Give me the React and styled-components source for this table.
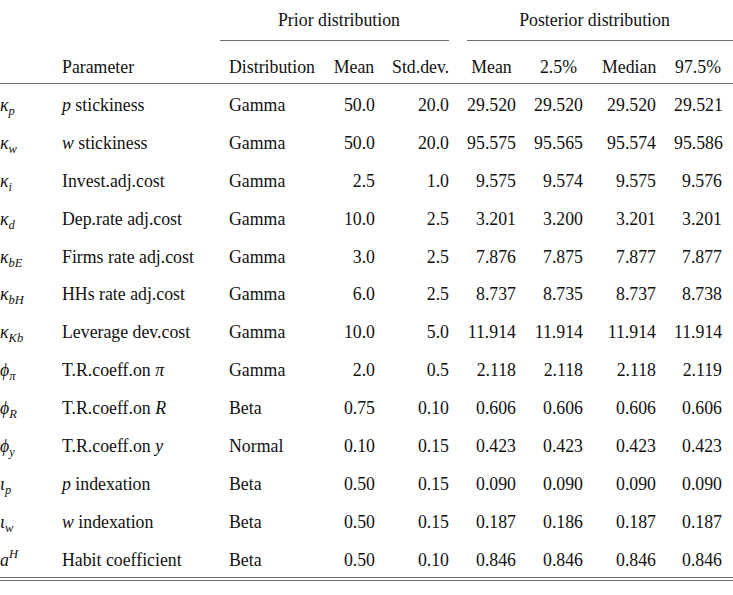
import React from "react";
import styled, { createGlobalStyle } from "styled-components";

const RULE = "#6e6e6e";

const GlobalStyle = createGlobalStyle`
  html, body {
    margin: 0;
    padding: 0;
    background: #fff;
  }
  body {
    font-family: "Liberation Serif", "Times New Roman", serif;
    color: #111;
  }
`;

// column widths from the left page edge
const COLUMNS = "62px 158px 105px 50px 74px 67px 67px 73px 80px";

const Page = styled.div`
  width: 733px;
  height: 595px;
  overflow: hidden;
`;

const Table = styled.div`
  width: 736px;
  font-size: 17.8px;
`;

const Row = styled.div`
  display: grid;
  grid-template-columns: ${COLUMNS};
  box-sizing: border-box;
  height: ${(props) => props.height};
  border-bottom: ${(props) => (props.ruled ? `1px solid ${RULE}` : "none")};
  padding-top: ${(props) => props.padTop};
  line-height: ${(props) => props.lineHeight};
`;

const Body = styled.div`
  border-bottom: 1px solid ${RULE};
`;

const BottomRule = styled.div`
  margin-top: 2px;
  height: 1px;
  background: ${RULE};
`;

const Spanner = styled.div`
  grid-column: ${(props) => props.span};
  margin-left: ${(props) => props.trim};
  padding: ${(props) => props.pad};
  text-align: center;
  border-bottom: 1px solid ${RULE};
  white-space: nowrap;
`;

const Cell = styled.div`
  white-space: nowrap;
  text-align: ${(props) => props.align || "left"};
  padding-left: ${(props) => props.pl || "0px"};
  padding-right: ${(props) => props.pr || "0px"};
`;

const M = styled.i`
  font-family: "Liberation Serif", "DejaVu Serif", serif;
  font-style: italic;
`;

const Sub = styled.sub`
  font-size: 12.5px;
  line-height: 0;
  vertical-align: -4px;
  font-style: italic;
`;

const Sup = styled.sup`
  font-size: 12.5px;
  line-height: 0;
  vertical-align: 8px;
  font-style: italic;
`;

// padding per numeric column: [left, right]
const NUM_PAD = [
  ["8px", "0px"],
  ["17px", "0px"],
  ["18px", "0px"],
  ["18px", "0px"],
  ["19px", "0px"],
  ["18px", "14px"],
];

const HEADERS = ["Mean", "Std.dev.", "Mean", "2.5%", "Median", "97.5%"];

const Sym = ({ base, sub, sup }) => (
  <M>
    {base}
    {sub && <Sub>{sub}</Sub>}
    {sup && <Sup>{sup}</Sup>}
  </M>
);

const rows = [
  { sym: ["κ", "p"], param: <><M>p</M> stickiness</>, dist: "Gamma", vals: ["50.0", "20.0", "29.520", "29.520", "29.520", "29.521"] },
  { sym: ["κ", "w"], param: <><M>w</M> stickiness</>, dist: "Gamma", vals: ["50.0", "20.0", "95.575", "95.565", "95.574", "95.586"] },
  { sym: ["κ", "i"], param: "Invest.adj.cost", dist: "Gamma", vals: ["2.5", "1.0", "9.575", "9.574", "9.575", "9.576"] },
  { sym: ["κ", "d"], param: "Dep.rate adj.cost", dist: "Gamma", vals: ["10.0", "2.5", "3.201", "3.200", "3.201", "3.201"] },
  { sym: ["κ", "bE"], param: "Firms rate adj.cost", dist: "Gamma", vals: ["3.0", "2.5", "7.876", "7.875", "7.877", "7.877"] },
  { sym: ["κ", "bH"], param: "HHs rate adj.cost", dist: "Gamma", vals: ["6.0", "2.5", "8.737", "8.735", "8.737", "8.738"] },
  { sym: ["κ", "Kb"], param: "Leverage dev.cost", dist: "Gamma", vals: ["10.0", "5.0", "11.914", "11.914", "11.914", "11.914"] },
  { sym: ["ϕ", "π"], param: <>T.R.coeff.on <M>π</M></>, dist: "Gamma", vals: ["2.0", "0.5", "2.118", "2.118", "2.118", "2.119"] },
  { sym: ["ϕ", "R"], param: <>T.R.coeff.on <M>R</M></>, dist: "Beta", vals: ["0.75", "0.10", "0.606", "0.606", "0.606", "0.606"] },
  { sym: ["ϕ", "y"], param: <>T.R.coeff.on <M>y</M></>, dist: "Normal", vals: ["0.10", "0.15", "0.423", "0.423", "0.423", "0.423"] },
  { sym: ["ι", "p"], param: <><M>p</M> indexation</>, dist: "Beta", vals: ["0.50", "0.15", "0.090", "0.090", "0.090", "0.090"] },
  { sym: ["ι", "w"], param: <><M>w</M> indexation</>, dist: "Beta", vals: ["0.50", "0.15", "0.187", "0.186", "0.187", "0.187"] },
  { sym: ["a", null, "H"], param: "Habit coefficient", dist: "Beta", vals: ["0.50", "0.10", "0.846", "0.846", "0.846", "0.846"] },
];

const App = () => {
  return (
    <Page>
      <GlobalStyle />
      <Table>
        <Row height="41px" padTop="10px" lineHeight="20px">
          <Spanner span="3 / 6" trim="0px" pad="0 0 0 9px">
            Prior distribution
          </Spanner>
          <Spanner span="6 / 10" trim="18px" pad="0 14px 0 0">
            Posterior distribution
          </Spanner>
        </Row>
        <Row height="43px" padTop="16px" lineHeight="20px" ruled>
          <Cell />
          <Cell>Parameter</Cell>
          <Cell pl="9px">Distribution</Cell>
          {HEADERS.map((h, i) => (
            <Cell key={i} align="center" pl={NUM_PAD[i][0]} pr={NUM_PAD[i][1]}>
              {h}
            </Cell>
          ))}
        </Row>
        <Body>
          {rows.map((r, idx) => (
            <Row key={idx} height="37.9px" padTop="6px" lineHeight="30px">
              <Cell>
                <Sym base={r.sym[0]} sub={r.sym[1]} sup={r.sym[2]} />
              </Cell>
              <Cell>{r.param}</Cell>
              <Cell pl="9px">{r.dist}</Cell>
              {r.vals.map((v, i) => (
                <Cell key={i} align="right" pl={NUM_PAD[i][0]} pr={NUM_PAD[i][1]}>
                  {v}
                </Cell>
              ))}
            </Row>
          ))}
        </Body>
        <BottomRule />
      </Table>
    </Page>
  );
};

export default App;
